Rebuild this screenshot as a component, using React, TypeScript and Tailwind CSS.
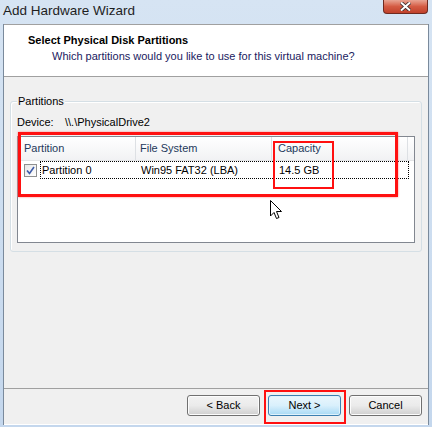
import React from "react";

const font = { fontFamily: "'Liberation Sans', Arial, sans-serif" };

function WinButton({ label, focused }: { label: string; focused?: boolean }) {
  return (
    <button
      className={
        "w-[73px] h-[21px] rounded-[3px] border text-[11px] text-black flex items-center justify-center " +
        (focused
          ? "border-[#3c7fb1] bg-gradient-to-b from-[#eaf6fd] via-[#d9f0fc] to-[#a7d9f5] shadow-[inset_0_0_0_1px_#dff2fc]"
          : "border-[#707070] bg-gradient-to-b from-[#f2f2f2] via-[#ebebeb] to-[#cfcfcf] shadow-[inset_0_0_0_1px_#fcfcfc]")
      }
    >
      {label}
    </button>
  );
}

export default function App() {
  return (
    <div
      className="relative w-[432px] h-[427px] overflow-hidden flex flex-col bg-gradient-to-b from-[#d6e4f3] to-[#c4d7ed]"
      style={font}
    >
      {/* barra de titulo */}
      <div className="h-[24px] flex items-start justify-between shrink-0">
        <span className="pl-[3px] pt-[1px] text-[13.5px] text-[#1e1e1e] leading-[19px]">
          Add Hardware Wizard
        </span>
        <div className="mr-[4px] w-[45px] h-[14px] rounded-b-[4px] border border-t-0 border-[#6e2a20] bg-gradient-to-b from-[#e8a493] via-[#d45b43] to-[#c0412b] flex items-center justify-center">
          <svg width="11" height="9" viewBox="0 0 11 9">
            <path d="M1 0.5 L10 8.5 M10 0.5 L1 8.5" stroke="#3b2b2b" strokeWidth="3.6" />
            <path d="M1 0.5 L10 8.5 M10 0.5 L1 8.5" stroke="#ffffff" strokeWidth="2" />
          </svg>
        </div>
      </div>

      {/* contenido de la ventana */}
      <div className="mx-[3px] h-[401px] border border-t-0 border-[#7a8a9c] flex flex-col bg-[#f0f0f0] shrink-0">
        <div className="h-[53px] bg-white border-t border-b border-[#a0a0a0] pl-[24px] pt-[8px] shrink-0">
          <div className="text-[11px] font-bold text-black leading-[14px]">Select Physical Disk Partitions</div>
          <div className="pl-[24px] pt-[2px] text-[11px] text-[#1a1a60] leading-[14px]">
            Which partitions would you like to use for this virtual machine?
          </div>
        </div>

        <div className="flex flex-col px-[6px] pt-[24px] flex-1">
          {/* grupo Particiones */}
          <div className="relative h-[151px] shrink-0 border border-[#d5dfe5] rounded-[3px] shadow-[inset_1px_1px_0_#ffffff] px-[6px] pt-[13px]">
            <span className="absolute left-[6px] top-[-8px] bg-[#f0f0f0] px-[1px] text-[11px] text-black leading-[14px]">
              Partitions
            </span>
            <div className="flex text-[11px] text-black leading-[14px]">
              <span className="w-[48px]">Device:</span>
              <span>\\.\PhysicalDrive2</span>
            </div>
            <div className="mt-[7px] h-[107px] border border-[#828790] bg-white flex flex-col">
              <div className="h-[24px] flex text-[11px] text-[#1e395b] bg-gradient-to-b from-[#ffffff] to-[#f1f2f4] border-b border-[#e3e4e6]">
                <div className="w-[118px] pl-[6px] flex items-center border-r border-[#dde0e4]">Partition</div>
                <div className="w-[136px] pl-[4px] flex items-center border-r border-[#dde0e4]">File System</div>
                <div className="w-[136px] pl-[6px] flex items-center border-r border-[#dde0e4]">Capacity</div>
                <div className="flex-1" />
              </div>
              <div className="h-[18px] flex items-center text-[11px] text-black">
                <div className="w-[13px] h-[13px] ml-[6px] border border-[#8f8f8f] bg-gradient-to-br from-[#e6e6e6] to-[#ffffff] flex items-center justify-center">
                  <svg width="9" height="9" viewBox="0 0 9 9">
                    <path d="M1 4.5 L3.5 7.5 L8 1" stroke="#3d5ba9" strokeWidth="1.6" fill="none" />
                  </svg>
                </div>
                <div className="ml-[3px] w-[369px] h-[18px] border border-dotted border-black flex items-center">
                  <span className="w-[100px] pl-[1px]">Partition 0</span>
                  <span className="w-[138px]">Win95 FAT32 (LBA)</span>
                  <span>14.5 GB</span>
                </div>
              </div>
            </div>
          </div>

          <div className="flex-1" />

          {/* separador y botones */}
          <div className="-mx-[6px] border-t border-[#a0a0a0] shadow-[0_1px_0_#ffffff] h-[36px] flex items-center justify-end gap-[8px] pr-[6px] pb-[3px]">
            <WinButton label="< Back" />
            <WinButton label="Next >" focused />
            <WinButton label="Cancel" />
          </div>
        </div>
      </div>

      {/* anotaciones rojas sobre la captura */}
      <div className="absolute left-[18px] top-[132px] w-[380px] h-[65px] border-[3px] border-[#ff1010] shadow-[0_0_2px_#ff8080]" />
      <div className="absolute left-[273px] top-[141px] w-[61px] h-[48px] border-2 border-[#ff1010]" />
      <div className="absolute left-[264px] top-[390px] w-[82px] h-[34px] border-2 border-[#ff1010]" />

      {/* cursor */}
      <svg className="absolute left-[270px] top-[200px]" width="13" height="20" viewBox="0 0 13 20">
        <path d="M0.5 0.5 L0.5 16 L4 12.5 L6.5 18.5 L9 17.5 L6.5 11.5 L11.5 11.5 Z" fill="#ffffff" stroke="#000000" strokeWidth="1" />
      </svg>
    </div>
  );
}
